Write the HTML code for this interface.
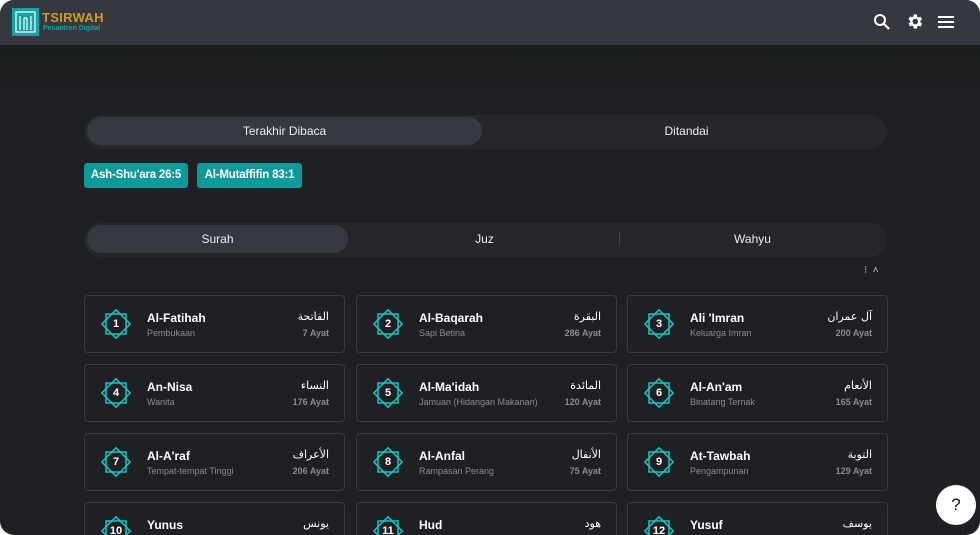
<!DOCTYPE html>
<html><head><meta charset="utf-8"><style>
*{box-sizing:border-box;margin:0;padding:0}
html,body{width:980px;height:535px;overflow:hidden;background:#fff}
.win{position:absolute;left:0;top:0;width:980px;height:535px;background:#1f2023;border-radius:14px;overflow:hidden;font-family:"Liberation Sans",sans-serif;color:#fff}
.band{position:absolute;left:0;top:45px;width:980px;height:45px;background:linear-gradient(#1b1e1e,#1e1f21)}
.hdr{position:absolute;left:0;top:0;width:980px;height:45px;background:#35383e}
.logo{position:absolute;left:12px;top:8px;width:27px;height:28px;background:#14a2a5}
.brand{position:absolute;left:42px;top:10px;color:#d09a2a;font-weight:bold;font-size:13px;letter-spacing:.3px}
.sub{position:absolute;left:43px;top:25px;color:#14a2a5;font-size:7px;font-weight:bold}
.tabs{position:absolute;left:84px;width:803px;height:34px;background:#25272b;border-radius:17px}
.tab{position:absolute;top:2px;height:28px;border-radius:14px;font-size:12px;text-align:center;line-height:28px;color:#eee}
.act{background:#363940}
.chip{position:absolute;top:163px;height:25px;background:#0f9a99;border-radius:3px;font-size:11.5px;font-weight:bold;line-height:25px;white-space:nowrap;text-align:center;letter-spacing:-.2px}
.card{position:absolute;width:261px;height:58px;border:1px solid #3a3c41;border-radius:4px;background:#1f2023}
.card .n{position:absolute;left:62px;top:15px;font-size:12px;font-weight:bold}
.card .m{position:absolute;left:62px;top:32px;font-size:9px;color:#8a8c90}
.card .a{position:absolute;right:15px;top:14px;font-size:11px;font-family:"DejaVu Sans",sans-serif}
.card .y{position:absolute;right:15px;top:32px;font-size:9px;color:#8a8c90;font-weight:bold}
.card svg{position:absolute;left:16px;top:12px}
.num{position:absolute;left:16px;top:12px;width:30px;height:32px;text-align:center;line-height:32px;font-size:11px;font-weight:bold}
.help{position:absolute;left:936px;top:485px;width:40px;height:40px;border-radius:50%;background:#fff;color:#111;text-align:center;line-height:40px;font-size:17px}
</style></head><body><div class="win">
<div class="band"></div>
<div class="hdr">
<div class="logo"><svg width="27" height="28"><g stroke="#fff" stroke-width="1.2" fill="none"><rect x="4" y="4" width="19" height="20"/><path d="M8 8v14M12 10v12M15 10v12M19 8v14M12 10h3"/></g></svg></div>
<div class="brand">TSIRWAH</div><div class="sub">Pesantren Digital</div>
<svg style="position:absolute;left:873px;top:13px" width="18" height="18"><circle cx="7" cy="7" r="5" stroke="#fff" stroke-width="2" fill="none"/><path d="M11 11l5 5" stroke="#fff" stroke-width="2.2"/></svg>
<svg style="position:absolute;left:905px;top:12px" width="19" height="19" viewBox="0 0 24 24"><path fill="#fff" d="M19.4 13a7.5 7.5 0 000-2l2.1-1.6-2-3.5-2.5 1a7.6 7.6 0 00-1.7-1L15 3h-4l-.4 2.6a7.6 7.6 0 00-1.7 1l-2.5-1-2 3.5L6.5 11a7.5 7.5 0 000 2l-2.1 1.6 2 3.5 2.5-1c.5.4 1.1.8 1.7 1L11 21h4l.4-2.6c.6-.3 1.2-.6 1.7-1l2.5 1 2-3.5zM13 15.5a3.5 3.5 0 110-7 3.5 3.5 0 010 7z"/></svg>
<svg style="position:absolute;left:937px;top:15px" width="18" height="14"><path d="M1 2h16M1 7h16M1 12h16" stroke="#fff" stroke-width="2"/></svg>
</div>
<div class="tabs" style="top:115px"><div class="tab act" style="left:3px;width:395px">Terakhir Dibaca</div><div class="tab" style="left:405px;width:395px">Ditandai</div></div>
<div class="chip" style="left:84px;width:104px">Ash-Shu'ara 26:5</div>
<div class="chip" style="left:197px;width:105px">Al-Mutaffifin 83:1</div>
<div class="tabs" style="top:223px"><div class="tab act" style="left:3px;width:261px">Surah</div><div class="tab" style="left:268px;width:265px">Juz</div><div style="position:absolute;left:535px;top:9px;width:1px;height:14px;background:#444"></div><div class="tab" style="left:537px;width:263px">Wahyu</div></div>
<div style="position:absolute;left:864px;top:265px;font-size:10px;color:#ccc">⁝ &nbsp;˄</div>
<div id="g"></div>
<div class="help">?</div>
</div>
<script>
var d=[["Al-Fatihah","Pembukaan","7"],["Al-Baqarah","Sapi Betina","286"],["Ali 'Imran","Keluarga Imran","200"],["An-Nisa","Wanita","176"],["Al-Ma'idah","Jamuan (Hidangan Makanan)","120"],["Al-An'am","Binatang Ternak","165"],["Al-A'raf","Tempat-tempat Tinggi","206"],["Al-Anfal","Rampasan Perang","75"],["At-Tawbah","Pengampunan","129"],["Yunus","","10"],["Hud","",""],["Yusuf","",""]];
var ar=["الفاتحة","البقرة","آل عمران","النساء","المائدة","الأنعام","الأعراف","الأنفال","التوبة","يونس","هود","يوسف"];
var xs=[84,356,627],h="";
d.forEach(function(c,i){var x=xs[i%3],y=295+Math.floor(i/3)*69;
h+='<div class="card" style="left:'+x+'px;top:'+y+'px"><svg width="30" height="32" viewBox="0 0 30 32"><g stroke="#1cc3c6" stroke-width="1.5" fill="none"><rect x="5" y="6" width="20" height="20"/><rect x="5" y="6" width="20" height="20" transform="rotate(45 15 16)"/></g></svg><div class="num">'+(i+1)+'</div><div class="n">'+c[0]+'</div><div class="m">'+c[1]+'</div><div class="a">'+ar[i]+'</div>'+(i<9?'<div class="y">'+c[2]+' Ayat</div>':'')+'</div>';});
document.getElementById("g").innerHTML=h;
</script>
</body></html>
